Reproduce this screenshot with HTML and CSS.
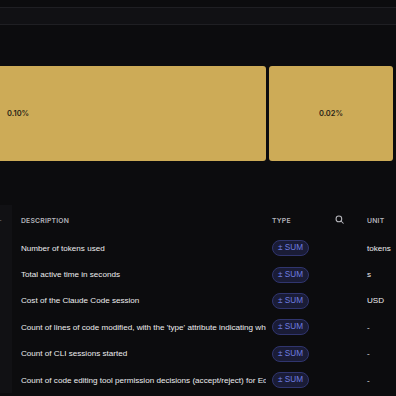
FILE: index.html
```html
<!DOCTYPE html>
<html lang="en">
<head>
    <meta charset="UTF-8">
    <title>Metrics</title>
    <link rel="stylesheet" href="styles.css">
</head>
<body>
    <div class="toolbar"></div>

    <div class="treemap">
        <div class="tile tile-big"><span>0.10%</span></div>
        <div class="tile tile-small"><span>0.02%</span></div>
    </div>

    <div class="table">
        <div class="side"><span class="dash">-</span></div>
        <div class="rows">
            <div class="row head">
                <div class="cell desc">DESCRIPTION</div>
                <div class="cell type">TYPE</div>
                <div class="cell icon">
                    <svg width="9" height="9" viewBox="0 0 12 12" fill="none" stroke="#b8b8bd" stroke-width="1.4">
                        <circle cx="5.2" cy="5.2" r="3.8"/>
                        <path d="M8 8l3 3" stroke-linecap="round"/>
                    </svg>
                </div>
                <div class="cell unit">UNIT</div>
            </div>
            <div class="row">
                <div class="cell desc">Number of tokens used</div>
                <div class="cell type"><span class="badge">± SUM</span></div>
                <div class="cell icon"></div>
                <div class="cell unit">tokens</div>
            </div>
            <div class="row">
                <div class="cell desc">Total active time in seconds</div>
                <div class="cell type"><span class="badge">± SUM</span></div>
                <div class="cell icon"></div>
                <div class="cell unit">s</div>
            </div>
            <div class="row">
                <div class="cell desc">Cost of the Claude Code session</div>
                <div class="cell type"><span class="badge">± SUM</span></div>
                <div class="cell icon"></div>
                <div class="cell unit">USD</div>
            </div>
            <div class="row">
                <div class="cell desc">Count of lines of code modified, with the 'type' attribute indicating whether lines were added or removed</div>
                <div class="cell type"><span class="badge">± SUM</span></div>
                <div class="cell icon"></div>
                <div class="cell unit">-</div>
            </div>
            <div class="row">
                <div class="cell desc">Count of CLI sessions started</div>
                <div class="cell type"><span class="badge">± SUM</span></div>
                <div class="cell icon"></div>
                <div class="cell unit">-</div>
            </div>
            <div class="row">
                <div class="cell desc">Count of code editing tool permission decisions (accept/reject) for Edit, MultiEdit and Write tools</div>
                <div class="cell type"><span class="badge">± SUM</span></div>
                <div class="cell icon"></div>
                <div class="cell unit">-</div>
            </div>
        </div>
    </div>
</body>
</html>
```

FILE: styles.css
```css
* {
    box-sizing: border-box;
}
body {
    margin: 0;
    background: #0c0c0e;
    font-family: 'Liberation Sans', Arial, sans-serif;
    color: #ececef;
    overflow: hidden;
    height: 396px;
}
.toolbar {
    margin-top: 7px;
    height: 18px;
    background: #111114;
    border-top: 1px solid #1f1f23;
    border-bottom: 1px solid #1f1f23;
}
.treemap {
    display: flex;
    gap: 3px;
    margin: 41px 3px 0 -4px;
    height: 95px;
}
.tile {
    background: #cdab57;
    border-radius: 3px;
    display: flex;
    align-items: center;
    font-family: 'Inter', sans-serif;
    font-size: 7.5px;
    font-weight: 600;
    color: #2a2418;
}
.tile-big {
    width: 270px;
    flex-shrink: 0;
    padding-left: 11px;
}
.tile-small {
    flex: 1;
    justify-content: center;
}
.table {
    display: flex;
    margin-top: 44px;
}
.side {
    width: 12px;
    background: #111114;
    flex-shrink: 0;
}
.dash {
    display: block;
    margin-top: 10px;
    margin-left: -1px;
    font-size: 8px;
    color: #77777d;
}
.rows {
    flex: 1;
    min-width: 0;
    padding-top: 1px;
}
.row {
    display: grid;
    grid-template-columns: 254px 60px 34px minmax(0, 1fr);
    height: 26.4px;
    align-items: center;
    font-size: 8.1px;
}
.row.head {
    height: 29px;
    font-family: 'Inter', sans-serif;
    font-size: 6.8px;
    font-weight: 600;
    color: #b4b4ba;
    letter-spacing: 0.2px;
}
.cell {
    white-space: nowrap;
    overflow: hidden;
    text-overflow: clip;
    min-width: 0;
}
.desc {
    padding-left: 9px;
    padding-right: 2px;
}
.type {
    padding-left: 6px;
}
.icon {
    padding-left: 9px;
    display: flex;
    align-items: center;
    height: 12px;
    margin-top: -3px;
}
.unit {
    padding-left: 7px;
}
.badge {
    display: inline-block;
    padding: 2px 5px;
    border-radius: 8px;
    background: #1a1c36;
    border: 1px solid #30356e;
    color: #6f7ee0;
    font-size: 8.2px;
    line-height: 10px;
}
```
